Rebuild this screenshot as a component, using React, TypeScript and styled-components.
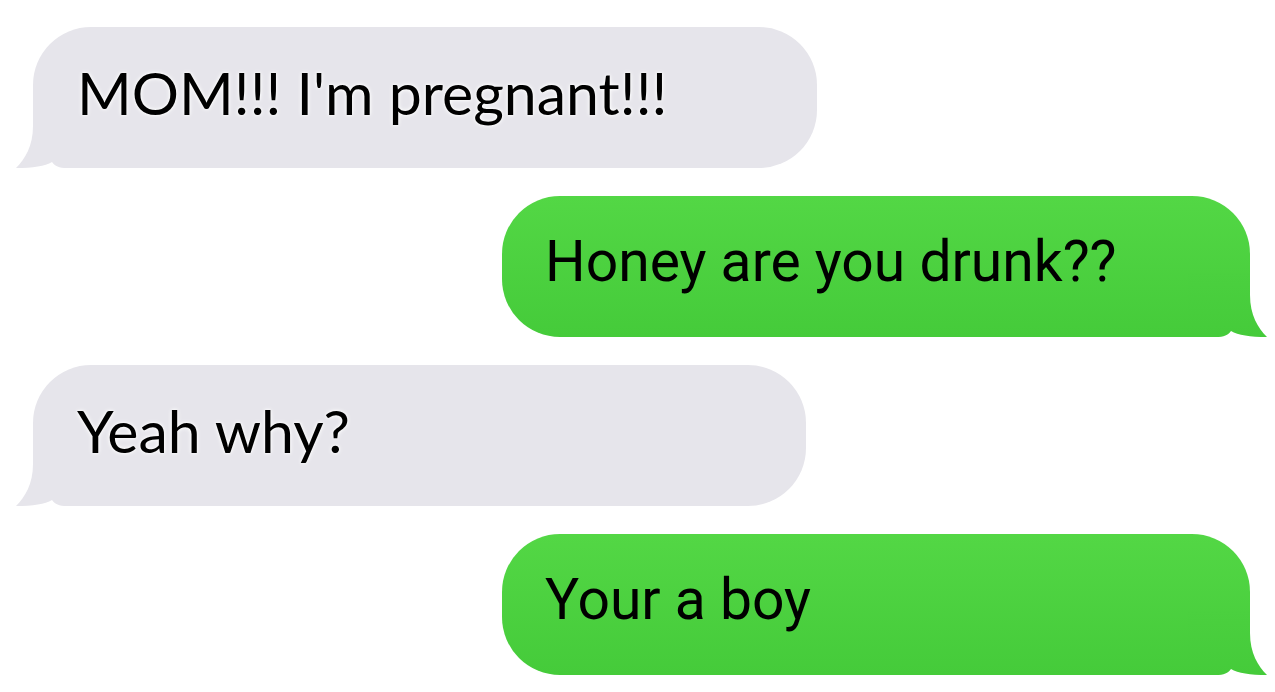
import React from "react";
import styled, { createGlobalStyle } from "styled-components";

const GlobalStyle = createGlobalStyle`
  html, body {
    margin: 0;
    padding: 0;
    background: #ffffff;
  }
`;

const Thread = styled.div`
  display: flex;
  flex-direction: column;
  gap: 28px;
  padding: 27px 25px 0 33px;
  width: 1275px;
  height: 692px;
  box-sizing: border-box;
  overflow: hidden;
`;

const Row = styled.div<{ $mine?: boolean }>`
  display: flex;
  justify-content: ${(p) => (p.$mine ? "flex-end" : "flex-start")};
`;

const Bubble = styled.div<{ $mine?: boolean; $width: number }>`
  position: relative;
  width: ${(p) => p.$width}px;
  height: 141px;
  box-sizing: border-box;
  display: flex;
  align-items: center;
  padding: 0 0 10px ${(p) => (p.$mine ? 43 : 44)}px;
  border-radius: 58px;
  background: ${(p) =>
    p.$mine ? "linear-gradient(#53d745, #45cb3a)" : "#e6e5eb"};
`;

const Text = styled.span<{ $mine?: boolean }>`
  position: relative;
  z-index: 1;
  color: #000;
  font-family: ${(p) =>
    p.$mine ? "Roboto, 'Noto Sans', sans-serif" : "Lato, 'Open Sans', sans-serif"};
  font-size: ${(p) => (p.$mine ? 57 : 59)}px;
  white-space: nowrap;
  text-shadow: ${(p) => (p.$mine ? "none" : "0 0 3px #fff, 0 0 5px #fff")};
`;

const Tail = styled.svg<{ $mine?: boolean }>`
  position: absolute;
  bottom: 0;
  width: 80px;
  height: 64px;
  ${(p) => (p.$mine ? "right: -18px;" : "left: -18px;")}
`;

const msgs = [
  { text: "MOM!!! I'm pregnant!!!", mine: false, width: 784 },
  { text: "Honey are you drunk??", mine: true, width: 748 },
  { text: "Yeah why?", mine: false, width: 773 },
  { text: "Your a boy", mine: true, width: 748 },
];

const Message = ({ text, mine, width, id }: { text: string; mine: boolean; width: number; id: string }) => (
  <Row $mine={mine}>
    <Bubble $mine={mine} $width={width}>
      <Tail $mine={mine} viewBox="0 0 80 64">
        {mine ? (
          <>
            <defs>
              <linearGradient id={id} x1="0" y1="0" x2="0" y2="64" gradientUnits="userSpaceOnUse">
                <stop offset="0" stopColor="#4bd03f" />
                <stop offset="1" stopColor="#45cb3a" />
              </linearGradient>
            </defs>
            <path
              d="M62 0 L0 0 L0 64 L28 64 C36 64 40 62 43 58 C50 62 62 64 79 64 C70 55 62 42 62 22 Z"
              fill={`url(#${id})`}
            />
          </>
        ) : (
          <path
            d="M18 0 L80 0 L80 64 L52 64 C44 64 40 62 37 58 C30 62 18 64 1 64 C10 55 18 42 18 22 Z"
            fill="#e6e5eb"
          />
        )}
      </Tail>
      <Text $mine={mine}>{text}</Text>
    </Bubble>
  </Row>
);

export default function App() {
  return (
    <>
      <GlobalStyle />
      <Thread>
        {msgs.map((m, i) => (
          <Message key={i} id={`tail-grad-${i}`} {...m} />
        ))}
      </Thread>
    </>
  );
}
